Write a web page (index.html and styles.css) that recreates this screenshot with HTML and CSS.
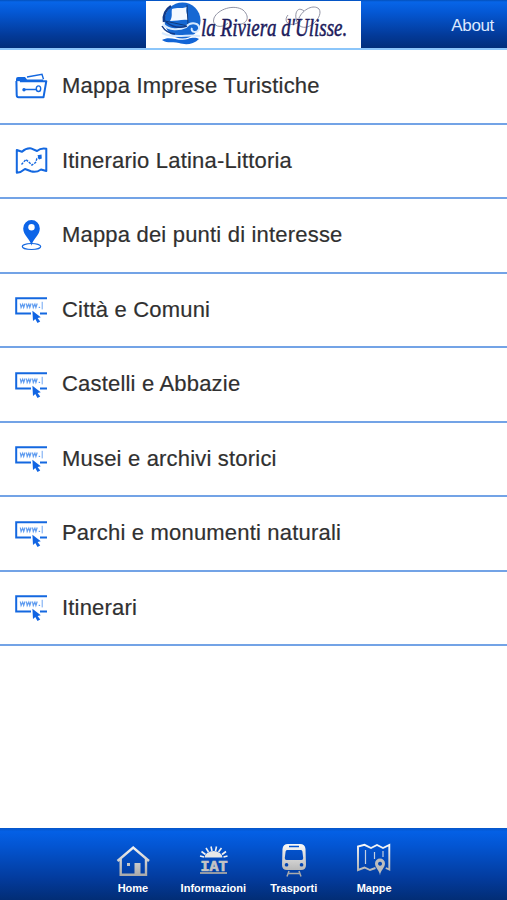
FILE: index.html
```html
<!DOCTYPE html>
<html lang="it">
<head>
<meta charset="utf-8">
<title>La Riviera d'Ulisse</title>
<link rel="stylesheet" href="styles.css">
</head>
<body>
<svg class="sprites" aria-hidden="true">
  <defs>
    <linearGradient id="metal-px" gradientUnits="userSpaceOnUse" x1="0" y1="2" x2="0" y2="34"><stop offset="0" stop-color="#fafafa"/><stop offset="1" stop-color="#a9a9a9"/></linearGradient>
    <symbol id="www" viewBox="0 0 34 34">
      <path d="M33 6.2H2.2V21.5H17M26 21.5h7" fill="none" stroke="#1468e0" stroke-width="2"/>
      <path d="M6.3 11.5l.8 4 1.6-3.4 1 3.4 1.3-4M12.4 11.5l.8 4 1.6-3.4 1 3.4 1.3-4M18.5 11.5l.8 4 1.6-3.4 1 3.4 1.3-4" fill="none" stroke="#5f9cf0" stroke-width="1.2"/>
      <path d="M24.7 15.4h1.4" stroke="#5f9cf0" stroke-width="1.2"/>
      <path d="M28.2 9.8v7.6" stroke="#5f9cf0" stroke-width=".9"/>
      <path d="M18.4 18.8l8.4 6.4-3.2.7 2.6 3.6-2.7 1.5-2.2-3.9-2.3 2z" fill="#1265e3"/>
    </symbol>
  </defs>
</svg>
<div class="app">
  <header class="bar">
    <svg class="logo" viewBox="0 0 215 47" role="img" aria-label="la Riviera d'Ulisse">
      <rect width="215" height="47" fill="#fff"/>
      <ellipse cx="36.5" cy="19.5" rx="18" ry="18" fill="#1668d3"/>
      <path d="M25 5C19 9 17 15 18 21" fill="none" stroke="#123a88" stroke-width="2.5"/>
      <path d="M26 8C31 6 35 8 41 6C39 11 42 14 42 19C36 18 31 20 24 20C27 15 25 12 26 8z" fill="#f4f9ff"/>
      <path d="M41 4L42 23M19 20L42 25" stroke="#123a78" stroke-width="1" fill="none"/>
      <path d="M17 23C23 30 34 29 40 26C45 20 54 22 53 28C51 33 44 31 46 27M16 32C27 38 43 33 54 35" fill="none" stroke="#d8eafe" stroke-width="2"/>
      <path d="M16 25Q20 32 29 33M20 21Q30 29 41 25" fill="none" stroke="#123a88" stroke-width="1.5"/>
      <path d="M16 39C24 34 32 41 42 38C47 36 51 37 53 38C47 44 39 44 33 42C27 40 22 43 16 39z" fill="#1265d6"/>
      <g fill="none" stroke="#85879a" stroke-width=".9">
        <path d="M82 22C76 28 65 26 68 17C72 8 88 3 97 9C106 17 99 25 90 23"/>
        <path d="M158 10C149 3 147 19 154 25C163 31 178 15 173 8C168 3 157 8 153 17M142 14C136 21 145 29 157 18"/>
      </g>
      <text class="logo-text" transform="translate(55 34.5) scale(.75 1)" textLength="195" lengthAdjust="spacingAndGlyphs">la Riviera d'Ulisse.</text>
    </svg>
    <a class="about">About</a>
  </header>
  <main class="menu">
    <a class="row"><svg class="icon" viewBox="0 0 34 34">
      <path d="M13 8L28 5.3l1.5 5" fill="none" stroke="#1468e0" stroke-width="1.4"/>
      <path d="M2 13V10q0-2 2-2h7l2 2.5h16V13z" fill="#1468e0"/>
      <path d="M6 12.2H32.3L29.5 28.3H4.6Q2.8 28.3 2.7 26L2.4 12" fill="#fff" stroke="#1468e0" stroke-width="2" stroke-linejoin="round"/>
      <path d="M9 20.5H22" stroke="#1468e0" stroke-width="1.5"/><circle cx="10" cy="20.7" r="1.7" fill="#1468e0"/><ellipse cx="24.5" cy="19.7" rx="2.2" ry="2.8" fill="none" stroke="#1468e0" stroke-width="1.4"/>
    </svg><span>Mappa Imprese Turistiche</span></a>
    <a class="row"><svg class="icon" viewBox="0 0 34 34">
      <path d="M2.8 7L8 8.8Q12 5 17 5.4L23 8Q27 4.7 32.3 5.8V28L27 26.5Q22 30 17 28.3L11 26Q7 29.5 2.8 29.8z" fill="none" stroke="#1468e0" stroke-width="2" stroke-linejoin="round"/>
      <path d="M7.5 21.5L12 16.5 18 22 21.5 19.5 23 15.5 26 14" fill="none" stroke="#1468e0" stroke-width="1.4" stroke-dasharray="2.5 1"/><path d="M23.5 12.2l4-.7.3 4-2.8 1z" fill="#1468e0"/>
    </svg><span>Itinerario Latina-Littoria</span></a>
    <a class="row"><svg class="icon" viewBox="0 0 34 34">
      <ellipse cx="17.5" cy="28.5" rx="9.2" ry="3" fill="none" stroke="#1468e0" stroke-width="1.2"/>
      <path d="M17.5 27.8C16.5 21 9.2 17.5 9.2 10.4a8.3 8.3 0 0 1 16.6 0C25.8 17.5 18.5 21 17.5 27.8z" fill="#0d65e8"/><circle cx="17.5" cy="9.3" r="3.2" fill="#fff"/>
    </svg><span>Mappa dei punti di interesse</span></a>
    <a class="row"><svg class="icon"><use href="#www"/></svg><span>Città e Comuni</span></a>
    <a class="row"><svg class="icon"><use href="#www"/></svg><span>Castelli e Abbazie</span></a>
    <a class="row"><svg class="icon"><use href="#www"/></svg><span>Musei e archivi storici</span></a>
    <a class="row"><svg class="icon"><use href="#www"/></svg><span>Parchi e monumenti naturali</span></a>
    <a class="row"><svg class="icon"><use href="#www"/></svg><span>Itinerari</span></a>
  </main>
  <nav class="tabs">
    <a class="tab"><svg viewBox="0 0 36 36">
      <path d="M2.5 19L18.2 5.5L34 19M5.7 17V32.8H31V17" fill="none" stroke="url(#metal-px)" stroke-width="2.4"/>
      <path d="M19.5 21h6V33h-6zM12 21h3v3h-3z" fill="url(#metal-px)"/>
    </svg><span>Home</span></a>
    <a class="tab"><svg viewBox="0 0 36 36">
      <path d="M9.5 15.5a9 6.5 0 0 1 18 0z" fill="#e8e8e8"/>
      <path d="M5 14l4 1M6.5 9.5l4 3M11 6l2.5 4M16 4.5l1 4.5M21.5 4.5l-1 4.5M26.5 6l-3 4M31 9.5l-4 3M32.5 14l-4 1" stroke="#f2f2f2" stroke-width="1.6"/>
      <text class="iat" x="5.5" y="28.5" textLength="27" lengthAdjust="spacing">IAT</text>
      <path d="M5 31h27" stroke="#a5a5a5" stroke-width="1.8"/>
    </svg><span>Informazioni</span></a>
    <a class="tab"><svg viewBox="0 0 36 36">
      <path fill-rule="evenodd" fill="url(#metal-px)" d="M12 2H24Q29 2 29.5 7L30 23Q30 28 25 28H11Q6 28 6 23L6.5 7Q7 2 12 2zM13 3.8v1.5H23V3.8zM11 8Q9.8 8 9.6 9.5L8.8 16Q8.7 18 10.5 18H25.5Q27.3 18 27.2 16L26.4 9.5Q26.2 8 25 8zM10.5 21a1.8 1.8 0 1 0 .1 0zM25.5 21a1.8 1.8 0 1 0 .1 0z"/>
      <path d="M13 29l-2 5.5M23 29l2 5.5M11.5 31.5H24.5" fill="none" stroke="#aaa" stroke-width="1.5"/>
    </svg><span>Trasporti</span></a>
    <a class="tab"><svg viewBox="0 0 36 36">
      <path d="M19.5 26L14 28l-5.5-2.5L2 28V4.5l6.5-1.7L15 6l6-3 6 3 6.3-3v24.5l-3.5-1.5" fill="none" stroke="url(#metal-px)" stroke-width="1.9"/>
      <path d="M9.5 8v14M18.5 10v7M27 9v6" stroke="#c5d0e2" stroke-width="1.2"/>
      <path fill-rule="evenodd" fill="#bdbdbd" d="M24 33.5C23.5 28 19 26 19 21.5a5 5 0 0 1 10 0C29 26 24.5 28 24 33.5zM24 19.7a2 2 0 1 0 .1 0z"/>
    </svg><span>Mappe</span></a>
  </nav>
</div>
</body>
</html>
```
FILE: styles.css
```css
* { box-sizing: border-box; }
body { margin: 0; background: #fff; font-family: "Liberation Sans", Arial, sans-serif; }
.sprites { position: absolute; width: 0; height: 0; }
.app { display: flex; flex-direction: column; height: 900px; width: 507px; }
.bar {
  display: grid; grid-template-columns: 1fr 215px 1fr; align-items: center;
  height: 50px; flex: none; border-bottom: 2px solid #8cc6fa;
  background: linear-gradient(#0350ba 0, #0765e8 4%, #0458d5 25%, #033997 75%, #022f7b 100%);
}
.logo { grid-column: 2; width: 215px; height: 47px; margin-top: 1px; }
.logo-text { font: italic 26px "Liberation Serif", serif; fill: #1c1b5c; stroke: #1c1b5c; stroke-width: .5px; }
.about { color: #dce8ff; font-size: 17px; letter-spacing: -.35px; justify-self: end; margin-right: 13px; margin-top: 3px; }
.menu { flex: 1; }
.row {
  display: flex; align-items: center; height: 74.5px; padding: 0 15px 1px 14px; gap: 14px;
  border-bottom: 2px solid #73a3e6; color: #303030; font-size: 22px; letter-spacing: .19px; white-space: nowrap;
}
.row span { margin-top: 1px; -webkit-text-stroke: .2px #303030; }
.icon { width: 34px; height: 34px; flex: none; }
.tabs {
  display: flex; justify-content: center; height: 72px; flex: none;
  background: linear-gradient(#0656c8 0, #0460e6 5%, #0355d2 25%, #033b9d 70%, #022d75 100%);
}
.tab { width: 80.4px; display: flex; flex-direction: column; align-items: center; padding-top: 14px; color: #fff; font-size: 11px; font-weight: bold; }
.tab svg { width: 36px; height: 36px; }
.tab span { margin-top: 4px; line-height: 13px; }
.iat { font: bold 15px "Liberation Mono", monospace; fill: #c4c4c4; stroke: #c4c4c4; stroke-width: .7px; }
```
